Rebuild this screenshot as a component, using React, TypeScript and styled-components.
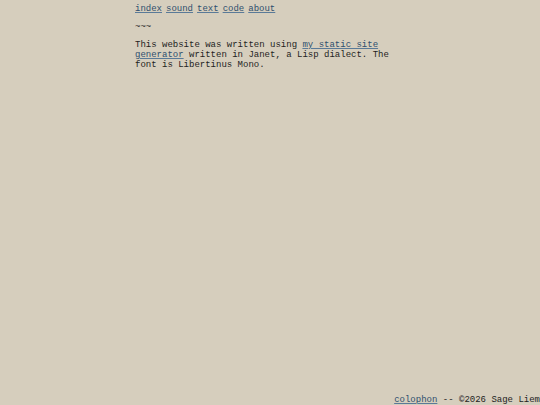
import React from "react";
import styled, { createGlobalStyle } from "styled-components";

const GlobalStyle = createGlobalStyle`
  html, body {
    margin: 0;
    padding: 0;
    background: #d6cebd;
  }
  body {
    font-family: "Liberation Mono", "DejaVu Sans Mono", monospace;
    font-size: 9px;
    line-height: 10px;
    color: #1e1e1e;
  }
`;

const Page = styled.div`
  min-height: 100vh;
  display: flex;
  flex-direction: column;
`;

const Main = styled.main`
  flex: 1;
  width: 270px;
  margin: 0 auto;
  padding-top: 4px;
`;

const Nav = styled.nav`
  display: flex;
  gap: 4px;
`;

const A = styled.a`
  color: #2f4f6e;
  text-decoration: underline;
  text-decoration-color: #5a7a98;
  text-underline-offset: 1px;
`;

const Para = styled.p`
  margin: 8px 0 0;
`;

const Footer = styled.footer`
  align-self: flex-end;
  line-height: 10px;
`;

export default function App() {
  return (
    <>
      <GlobalStyle />
      <Page>
        <Main>
          <Nav>
            <A href="#">index</A>
            <A href="#">sound</A>
            <A href="#">text</A>
            <A href="#">code</A>
            <A href="#">about</A>
          </Nav>
          <Para>~~~</Para>
          <Para>
            This website was written using <A href="#">my static site generator</A> written in
            Janet, a Lisp dialect. The font is Libertinus Mono.
          </Para>
        </Main>
        <Footer>
          <A href="#">colophon</A> -- ©2026 Sage Liem
        </Footer>
      </Page>
    </>
  );
}
